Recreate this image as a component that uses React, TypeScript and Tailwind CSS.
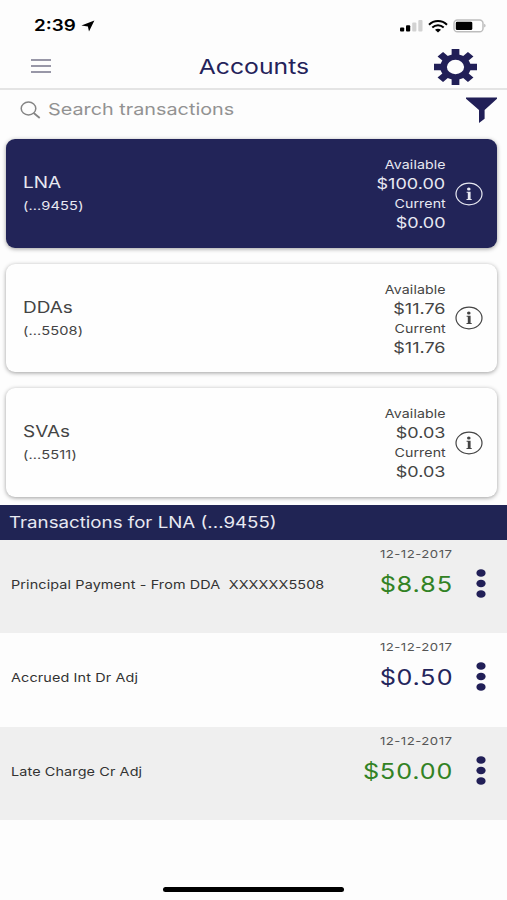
import type { ReactNode } from "react";
import clsx from "clsx";

type Account = {
    name: string;
    number: string;
    available: string;
    current: string;
    selected?: boolean;
};

const accounts: Account[] = [
    { name: "LNA", number: "(...9455)", available: "$100.00", current: "$0.00", selected: true },
    { name: "DDAs", number: "(...5508)", available: "$11.76", current: "$11.76" },
    { name: "SVAs", number: "(...5511)", available: "$0.03", current: "$0.03" },
];

const transactions = [
    { title: "Principal Payment - From DDA  XXXXXX5508", date: "12-12-2017", amount: "$8.85", credit: true },
    { title: "Accrued Int Dr Adj", date: "12-12-2017", amount: "$0.50", credit: false },
    { title: "Late Charge Cr Adj", date: "12-12-2017", amount: "$50.00", credit: true },
];

// Wide lettering: text keeps its box and is stretched from one edge
function Wide({ className, children }: { className?: string; children: ReactNode }) {
    return (
        <span className={clsx("block w-max scale-x-[1.2] whitespace-pre", className)}>
            {children}
        </span>
    );
}

function GearIcon() {
    return (
        <svg width="43" height="36" viewBox="0 0 100 100" preserveAspectRatio="none" fill="#211f57">
            {[0, 45, 90, 135].map((angle) => (
                <path key={angle} d="M41 0h18v100h-18z" transform={`rotate(${angle} 50 50)`} />
            ))}
            <circle cx="50" cy="50" r="35.5" />
            <circle cx="50" cy="50" r="20" fill="#fdfdfd" />
        </svg>
    );
}

function InfoIcon() {
    return (
        <svg width="28" height="24" viewBox="0 0 28 24" fill="none">
            <ellipse cx="14" cy="12" rx="13" ry="10.8" stroke="currentColor" strokeWidth="1.2" />
            <ellipse cx="13.8" cy="7" rx="1.8" ry="1.5" fill="currentColor" />
            <path d="M11.6 9.8h4v7.2h1.1v1h-5.2v-1h1.3v-6.2h-1.2z" fill="currentColor" />
        </svg>
    );
}

function StatusBar() {
    return (
        <div className="flex h-[45px] items-start justify-between pl-[33.5px] pr-[21px] pt-[15px]">
            <div className="flex items-center">
                <Wide className="origin-left text-[15.7px] leading-[22px] font-semibold text-black">2:39</Wide>
                <svg width="14" height="12" viewBox="0 0 14 12" className="ml-[13px]">
                    <path d="M13.4.4 8 11.6 6.9 6.4.4 5.5z" fill="#000" />
                </svg>
            </div>
            <div className="flex h-[22px] items-center">
                <svg width="23" height="12" viewBox="0 0 23 12">
                    <rect x="0" y="7.5" width="4.2" height="4" rx="1" fill="#000" />
                    <rect x="6" y="5.2" width="4.2" height="6.3" rx="1" fill="#000" />
                    <rect x="12.2" y="2.5" width="4.2" height="9" rx="1" fill="#d2d2d2" />
                    <rect x="18.3" y="0" width="4.2" height="11.5" rx="1" fill="#d2d2d2" />
                </svg>
                <svg width="20" height="13" viewBox="0 0 20 13" className="ml-[5px]" fill="none" stroke="#000" strokeWidth="2">
                    <path d="M1 4.7C6-.2 14-.2 19 4.7" />
                    <path d="M4.3 7.6c3.3-3 8.1-3 11.4 0" />
                    <path d="M7 9.8c1.8-1.4 4.2-1.4 6 0l-3 2.6z" fill="#000" stroke="none" />
                </svg>
                <svg width="33" height="14" viewBox="0 0 33 14" className="ml-[5px]">
                    <rect x="1" y="1" width="29" height="11.8" rx="3.4" fill="#fff" stroke="#bdbdbd" strokeWidth="1.5" />
                    <rect x="2.8" y="2.7" width="16.5" height="8.4" rx="1.4" fill="#000" />
                    <path d="M31.3 4.8c1.6.6 1.6 3.2 0 3.8z" fill="#aaa" />
                </svg>
            </div>
        </div>
    );
}

function AccountCard({ account }: { account: Account }) {
    return (
        <div
            className={clsx(
                "flex h-[108.5px] items-center rounded-[9px] pl-[17px] pr-[14px] shadow-[0_1px_4px_rgba(0,0,0,0.38)]",
                account.selected ? "bg-[#222458] text-[#e8e9f2]" : "bg-[#fefefe] text-[#444]"
            )}
        >
            <div className="flex-1 pt-[1px]">
                <Wide className="origin-left text-[15.8px] leading-[23px]">{account.name}</Wide>
                <Wide className="origin-left text-[12.2px] leading-[23px] tracking-[0.1px]">{account.number}</Wide>
            </div>
            <div className="mr-[9.5px] flex flex-col items-end pt-[0.5px]">
                <Wide className="origin-right text-[11.8px] leading-[18px] tracking-[0.1px]">Available</Wide>
                <Wide className="origin-right text-[15px] leading-[19px]">{account.available}</Wide>
                <Wide className="origin-right text-[11.8px] leading-[22px] tracking-[0.1px]">Current</Wide>
                <Wide className="origin-right text-[15px] leading-[16px]">{account.current}</Wide>
            </div>
            <InfoIcon />
        </div>
    );
}

export default function App() {
    return (
        <div className="flex h-[900px] w-[507px] flex-col overflow-hidden bg-[#fdfdfd] font-['Inter','Liberation_Sans',sans-serif]">
            <StatusBar />

            {/* Header */}
            <header className="grid h-[45px] grid-cols-[1fr_auto_1fr] items-center border-b-2 border-[#e4e4e4] pl-[31px] pr-[30px]">
                <svg width="20" height="14" viewBox="0 0 20 14" stroke="#77758a" strokeWidth="1.4" className="mb-[2px]">
                    <path d="M0 1h20M0 7h20M0 13h20" />
                </svg>
                <Wide className="origin-center text-[20.6px] leading-[40px] text-[#24225a]">Accounts</Wide>
                <div className="flex justify-end">
                    <GearIcon />
                </div>
            </header>

            {/* Search */}
            <div className="flex h-[49px] items-start pl-[20px] pr-[10px]">
                <svg width="21" height="18" viewBox="0 0 21 18" fill="none" stroke="#858585" strokeWidth="1.5" className="mt-[11px]">
                    <ellipse cx="8.5" cy="7.5" rx="7.3" ry="6.4" />
                    <path d="m13.7 12 6 5" strokeWidth="1.8" />
                </svg>
                <Wide className="ml-[6.5px] mt-[7px] origin-left text-[16.5px] leading-[25px] text-[#929292]">Search transactions</Wide>
                <svg width="31" height="26" viewBox="0 0 31 26" className="mt-[7px] ml-auto" fill="#211f57">
                    <path d="M0 .5h31v1.3L18.6 13v8.8L13 26V13L0 1.8z" />
                </svg>
            </div>

            {/* Accounts */}
            <div className="flex h-[366px] flex-col gap-4 pl-[6px] pr-[10px] pt-[0.4px]">
                {accounts.map((account) => (
                    <AccountCard key={account.name} account={account} />
                ))}
            </div>

            {/* Transactions */}
            <h2 className="h-[35px] bg-[#202454] pl-[9px] text-[#e8e9f2]">
                <Wide className="origin-left text-[15.6px] leading-[35px]">Transactions for LNA (...9455)</Wide>
            </h2>
            {transactions.map((item) => (
                <div key={item.title} className="flex h-[93.3px] items-start pl-[11px] pr-[21px] odd:bg-[#fdfdfd] even:bg-[#efefef]">
                    <Wide className="mt-[35px] origin-left text-[12px] leading-[20px] tracking-[0.1px] text-[#333]">{item.title}</Wide>
                    <div className="ml-auto flex flex-col items-end pt-[5px]">
                        <Wide className="origin-right text-[11px] leading-[18px] tracking-[0.4px] text-[#555]">{item.date}</Wide>
                        <Wide
                            className={clsx(
                                "origin-right text-[21px] leading-[43px] tracking-[0.2px] tabular-nums",
                                item.credit ? "text-[#328224]" : "text-[#24255c]"
                            )}
                        >
                            {item.amount}
                        </Wide>
                    </div>
                    <svg width="10" height="30" viewBox="0 0 10 30" className="mt-[29px] ml-[23.5px]" fill="#211f57">
                        <ellipse cx="5" cy="4" rx="4.6" ry="3.8" />
                        <ellipse cx="5" cy="14.5" rx="4.6" ry="3.8" />
                        <ellipse cx="5" cy="25" rx="4.6" ry="3.8" />
                    </svg>
                </div>
            ))}

            <div className="mx-auto mt-auto mb-[8px] h-[5px] w-[181px] rounded-full bg-black" />
        </div>
    );
}
